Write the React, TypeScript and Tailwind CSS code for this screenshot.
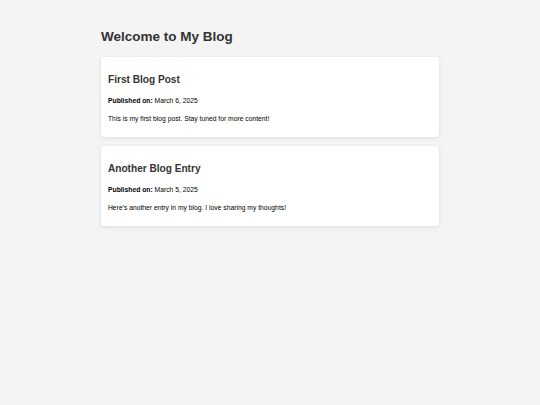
const posts = [
  {
    title: "First Blog Post",
    date: "March 6, 2025",
    body: "This is my first blog post. Stay tuned for more content!",
  },
  {
    title: "Another Blog Entry",
    date: "March 5, 2025",
    body: "Here's another entry in my blog. I love sharing my thoughts!",
  },
];

const App = () => {
  return (
    <div className="min-h-[405px] bg-[#f4f4f4] pt-[29px] font-['Liberation_Sans',Arial,sans-serif] text-[6.75px] text-black">
      <div className="mx-auto w-[338px]">
        <h1 className="mb-[12px] text-[13.5px] font-bold leading-[16px] text-[#333]">
          Welcome to My Blog
        </h1>
        <div className="flex flex-col gap-[9px]">
          {posts.map((post) => (
            <div
              key={post.title}
              className="rounded-[3px] bg-white px-[7px] pb-[14px] pt-[17px] shadow-[0_1px_4px_rgba(0,0,0,0.1)]"
            >
              <h2 className="mb-[11px] text-[10.1px] font-bold leading-[12px] text-[#333]">
                {post.title}
              </h2>
              <p className="mb-[10px] leading-[8px]">
                <strong>Published on:</strong> {post.date}
              </p>
              <p className="leading-[8px]">{post.body}</p>
            </div>
          ))}
        </div>
      </div>
    </div>
  );
};

export default App;
